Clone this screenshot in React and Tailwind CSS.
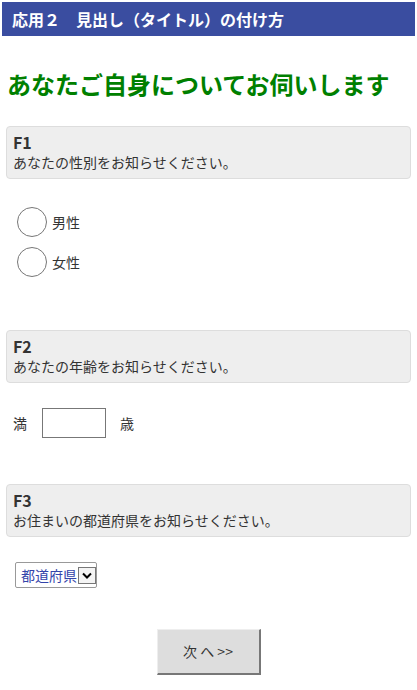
import { useState } from 'react';

const FONT = "font-['Noto_Sans_CJK_JP','Noto_Sans',sans-serif]";

function QuestionBox({ code, text, className = '' }) {
  return (
    <div className={`rounded-[4px] border border-[#dddddd] bg-[#eeeeee] px-[6px] pt-[5px] pb-[6px] text-[#333333] ${className}`}>
      <div className="text-[16px] leading-[20px] font-bold">{code}</div>
      <div className="text-[14px] leading-[20px]">{text}</div>
    </div>
  );
}

function Radio({ label, checked, onSelect }) {
  return (
    <label className="flex items-center gap-[5px] cursor-pointer" onClick={onSelect}>
      <span className="flex h-[30px] w-[30px] items-center justify-center rounded-full border border-[#777777] bg-white">
        {checked && <span className="h-[14px] w-[14px] rounded-full bg-[#333333]" />}
      </span>
      <span className="text-[14px] leading-[20px] text-[#333333]">{label}</span>
    </label>
  );
}

export default function App() {
  const [sex, setSex] = useState(null);
  const [age, setAge] = useState('');

  return (
    <div className={`min-h-[690px] bg-white ${FONT}`}>
      <div className="mx-[2px] mt-[2px] h-[34px] bg-[#3a4da0] pl-[10px] text-[16px] leading-[34px] font-bold text-white">
        応用２　見出し（タイトル）の付け方
      </div>

      <div className="px-[6px]">
        <h1 className="mt-[30px] pl-[1px] text-[24px] leading-[36px] font-bold text-[#008000]">
          あなたご自身についてお伺いします
        </h1>

        <QuestionBox code="F1" text="あなたの性別をお知らせください。" className="mt-[24px]" />
        <div className="mt-[28px] ml-[11px] flex flex-col gap-[10px]">
          <Radio label="男性" checked={sex === 'm'} onSelect={() => setSex('m')} />
          <Radio label="女性" checked={sex === 'f'} onSelect={() => setSex('f')} />
        </div>

        <QuestionBox code="F2" text="あなたの年齢をお知らせください。" className="mt-[53px]" />
        <div className="mt-[25px] ml-[7px] flex items-center text-[14px] text-[#333333]">
          <span>満</span>
          <input
            type="text"
            value={age}
            onChange={(e) => setAge(e.target.value)}
            className="ml-[15px] h-[30px] w-[64px] border border-[#777777] bg-white px-[4px] outline-none"
          />
          <span className="ml-[14px]">歳</span>
        </div>

        <QuestionBox code="F3" text="お住まいの都道府県をお知らせください。" className="mt-[46px]" />
        <div className="mt-[25px] ml-[9px] flex h-[26px] w-[82px] items-center rounded-[2px] border border-[#999999] bg-white pl-[5px]">
          <select className="appearance-none bg-transparent text-[14px] leading-[20px] text-[#3344aa] outline-none">
            <option>都道府県</option>
          </select>
          <span className="ml-[1px] flex h-[17px] w-[19px] items-center justify-center border border-[#777777] bg-[#f4f4f4]">
            <svg width="10" height="7" viewBox="0 0 10 7">
              <path d="M1 1.5 L5 5.5 L9 1.5" fill="none" stroke="#000" strokeWidth="2" />
            </svg>
          </span>
        </div>

        <div className="mt-[41px] flex justify-center">
          <button className="h-[46px] w-[104px] border-t border-l border-t-[#eeeeee] border-l-[#eeeeee] border-r-2 border-b-2 border-r-[#777777] border-b-[#777777] bg-[#dddddd] text-[14px] text-[#333333]">
            次 へ &gt;&gt;
          </button>
        </div>
      </div>
    </div>
  );
}
